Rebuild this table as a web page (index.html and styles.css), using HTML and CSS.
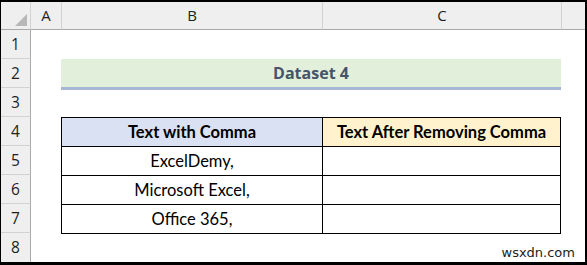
FILE: index.html
```html
<!DOCTYPE html>
<html lang="en">
<head>
  <meta charset="UTF-8" />
  <title>Dataset 4</title>
  <link rel="stylesheet" href="styles.css">
</head>
<body>
  <div class="frame">
    <div class="sheet">
      <!-- column headers -->
      <div class="corner"><span class="select-all"></span></div>
      <div class="col-head">A</div>
      <div class="col-head">B</div>
      <div class="col-head">C</div>
      <div class="col-head"></div>

      <!-- row headers -->
      <div class="row-head r1">1</div>
      <div class="row-head r2">2</div>
      <div class="row-head r3">3</div>
      <div class="row-head r4">4</div>
      <div class="row-head r5">5</div>
      <div class="row-head r6">6</div>
      <div class="row-head r7">7</div>
      <div class="row-head r8">8</div>

      <div class="title-band">Dataset 4</div>

      <div class="data">
        <table>
          <tr>
            <th class="th-src">Text with Comma</th>
            <th class="th-out">Text After Removing Comma</th>
          </tr>
          <tr><td>ExcelDemy,</td><td></td></tr>
          <tr><td>Microsoft Excel,</td><td></td></tr>
          <tr><td>Office 365,</td><td></td></tr>
        </table>
      </div>
    </div>
    <div class="mark">wsxdn.com</div>
  </div>
</body>
</html>
```

FILE: styles.css
```css
* {
  box-sizing: border-box;
  margin: 0;
  padding: 0;
}

body {
  background: #000;
  width: 587px;
  height: 265px;
  overflow: hidden;
  font-family: 'Open Sans', 'Liberation Sans', sans-serif;
}

.frame {
  position: relative;
  margin: 2px 2px 0 1px;
  height: 260px;
  background: #fff;
}

.sheet {
  display: grid;
  grid-template-columns: 30px 30px 261px 239px 1fr;
  grid-template-rows: 28px repeat(8, 29px);
  height: 100%;
}

/* header strip */
.corner {
  position: relative;
  background: #efefef;
  border-right: 1px solid #d2d2d2;
  border-bottom: 1px solid #a9a9a9;
}

.select-all {
  position: absolute;
  right: 3px;
  bottom: 3px;
  width: 0;
  height: 0;
  border-left: 12px solid transparent;
  border-bottom: 12px solid #b8b8b8;
}

.col-head {
  background: #efefef;
  border-left: 1px solid #d2d2d2;
  border-bottom: 1px solid #a9a9a9;
  color: #1f1f1f;
  font-size: 15px;
  line-height: 27px;
  text-align: center;
}

.col-head:nth-child(2) {
  border-left: none;
}

.row-head {
  grid-column: 1;
  background: #efefef;
  border-right: 1px solid #a9a9a9;
  border-bottom: 1px solid #d2d2d2;
  color: #1f1f1f;
  font-size: 15.5px;
  line-height: 28px;
  text-align: center;
}

.r1 { grid-row: 2; }
.r2 { grid-row: 3; }
.r3 { grid-row: 4; }
.r4 { grid-row: 5; }
.r5 { grid-row: 6; }
.r6 { grid-row: 7; }
.r7 { grid-row: 8; }
.r8 { grid-row: 9; border-bottom: none; }

/* merged title across B:C */
.title-band {
  grid-column: 3 / 5;
  grid-row: 3;
  height: 31px;
  background: #e2efda;
  border-bottom: 3px solid #a6b7d6;
  color: #44546a;
  font-weight: 700;
  font-size: 16px;
  line-height: 28px;
  text-align: center;
}

.data {
  grid-column: 3 / 5;
  grid-row: 5 / 9;
}

table {
  border-collapse: collapse;
  width: 500px;
  font-family: 'Lato', 'Open Sans', sans-serif;
  font-size: 16.5px;
  color: #000;
}

th,
td {
  height: 29px;
  border: 1px solid #000;
  text-align: center;
  padding: 0;
}

th {
  font-weight: 700;
}

.th-src {
  width: 261px;
  background: #d9e1f2;
}

.th-out {
  background: #fff2cc;
}

.mark {
  position: absolute;
  right: 10px;
  bottom: 2px;
  font-family: 'DejaVu Sans', sans-serif;
  font-size: 13px;
  color: #222;
}
```
